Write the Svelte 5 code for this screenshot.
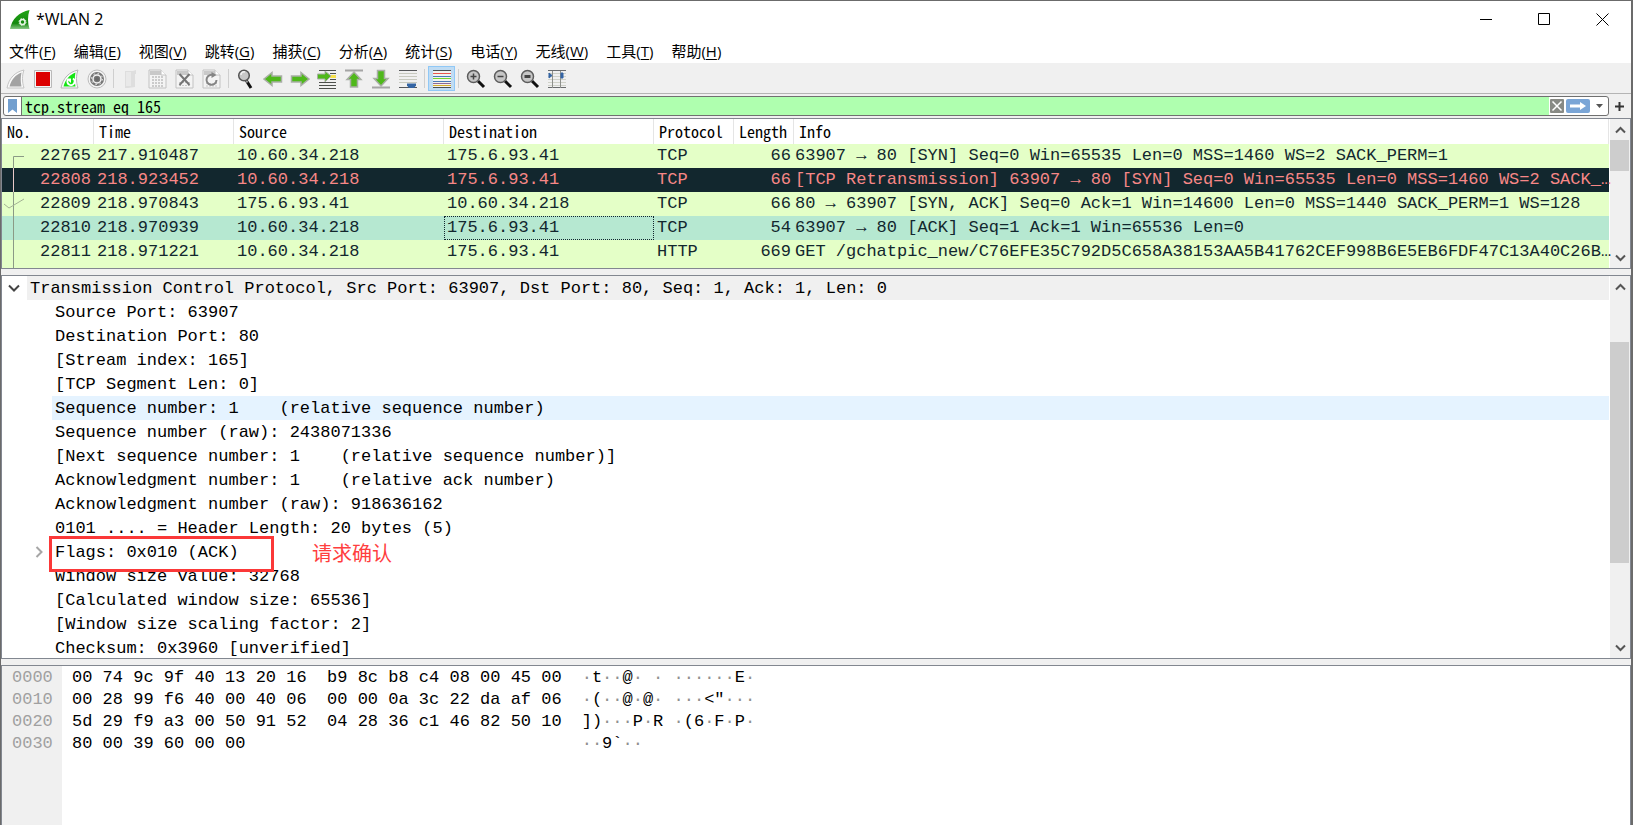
<script>
  const menus = [
    ['文件', 'F'], ['编辑', 'E'], ['视图', 'V'], ['跳转', 'G'], ['捕获', 'C'], ['分析', 'A'],
    ['统计', 'S'], ['电话', 'Y'], ['无线', 'W'], ['工具', 'T'], ['帮助', 'H']
  ];

  const tools = [
    ['start', 'stop', 'restart', 'options'],
    ['open', 'save', 'close', 'reload'],
    ['find', 'back', 'forward', 'goto', 'first', 'last', 'autoscroll'],
    ['colorize'],
    ['zoomin', 'zoomout', 'zoomreset', 'resize']
  ];

  const columns = ['No.', 'Time', 'Source', 'Destination', 'Protocol', 'Length', 'Info'];

  const packets = [
    { kind: 'http', cells: ['22765', '217.910487', '10.60.34.218', '175.6.93.41', 'TCP', '66', '63907 → 80 [SYN] Seq=0 Win=65535 Len=0 MSS=1460 WS=2 SACK_PERM=1'] },
    { kind: 'bad', cells: ['22808', '218.923452', '10.60.34.218', '175.6.93.41', 'TCP', '66', '[TCP Retransmission] 63907 → 80 [SYN] Seq=0 Win=65535 Len=0 MSS=1460 WS=2 SACK_…'] },
    { kind: 'http', cells: ['22809', '218.970843', '175.6.93.41', '10.60.34.218', 'TCP', '66', '80 → 63907 [SYN, ACK] Seq=0 Ack=1 Win=14600 Len=0 MSS=1440 SACK_PERM=1 WS=128'] },
    { kind: 'selected', cells: ['22810', '218.970939', '10.60.34.218', '175.6.93.41', 'TCP', '54', '63907 → 80 [ACK] Seq=1 Ack=1 Win=65536 Len=0'] },
    { kind: 'http', cells: ['22811', '218.971221', '10.60.34.218', '175.6.93.41', 'HTTP', '669', 'GET /gchatpic_new/C76EFE35C792D5C658A38153AA5B41762CEF998B6E5EB6FDF47C13A40C26B…'] }
  ];

  const fields = [
    'Source Port: 63907',
    'Destination Port: 80',
    '[Stream index: 165]',
    '[TCP Segment Len: 0]',
    'Sequence number: 1    (relative sequence number)',
    'Sequence number (raw): 2438071336',
    '[Next sequence number: 1    (relative sequence number)]',
    'Acknowledgment number: 1    (relative ack number)',
    'Acknowledgment number (raw): 918636162',
    '0101 .... = Header Length: 20 bytes (5)',
    'Flags: 0x010 (ACK)',
    'Window size value: 32768',
    '[Calculated window size: 65536]',
    '[Window size scaling factor: 2]',
    'Checksum: 0x3960 [unverified]'
  ];

  const bytes = [
    ['0000', '00 74 9c 9f 40 13 20 16  b9 8c b8 c4 08 00 45 00', '·t··@· · ······E·'],
    ['0010', '00 28 99 f6 40 00 40 06  00 00 0a 3c 22 da af 06', '·(··@·@· ···<"···'],
    ['0020', '5d 29 f9 a3 00 50 91 52  04 28 36 c1 46 82 50 10', '])···P·R ·(6·F·P·'],
    ['0030', '80 00 39 60 00 00', '··9`··']
  ];

  let filter = $state('tcp.stream eq 165');
</script>

{#snippet sheet()}
  <path d="M1 1h12l5 5v13H1z" fill="#f4f4f4" stroke="#c2c2c2" />
  <path d="M2 2h11v4H2z" fill="#c9c9c9" />
  <path d="M13 1v5h5" fill="#fff" stroke="#c2c2c2" />
{/snippet}

{#snippet lens()}
  <path d="M12 12l6 6" stroke="#111" stroke-width="3" />
  <circle cx="7.500" cy="7.500" r="6" fill="#c6c6c6" stroke="#5c5c5c" stroke-width="1.500" />
{/snippet}

{#snippet icon(name)}
  <svg width="20" height="20" viewBox="0 0 20 20" fill="none" aria-hidden="true">
    {#if name === 'start'}
      <path d="M1 19C3 9 9 3 18 1c-2 5-2 12 0 18z" fill="#fafafa" stroke="#c4c4c4" />
      <path d="M3.500 17.500C5.500 10 9.500 6 15.500 3.500c-1 5-1 9 0 14z" fill="#a3a3a3" />
    {:else if name === 'stop'}
      <path d="M1.500 1.500h17v17h-17z" fill="#f5f5f5" stroke="#b9b9b9" />
      <path d="M3 3h14v14H3z" fill="#dc0000" />
    {:else if name === 'restart'}
      <path d="M1 19C3 9 9 3 18 1c-2 5-2 12 0 18z" fill="#fafafa" stroke="#b5b5b5" />
      <path d="M3.500 17.500C5.500 10 9.500 6 15.500 3.500c-1 5-1 9 0 14z" fill="#14e514" />
      <path d="M8 10.500a3.600 3.600 0 1 0 5-1" stroke="#fff" stroke-width="2" />
      <path d="M6 9.500h5v4.500z" fill="#fff" />
    {:else if name === 'options'}
      <circle cx="10" cy="10" r="9" fill="#f4f4f4" stroke="#bcbcbc" />
      <circle cx="10" cy="10" r="7" fill="#777" />
      <circle cx="10" cy="10" r="4" stroke="#f4f4f4" stroke-width="1.500" />
      <circle cx="10" cy="10" r="5.500" stroke="#f4f4f4" stroke-dasharray="1.500 2.820" />
      <circle cx="10" cy="10" r="2" fill="#686868" />
    {:else if name === 'open'}
      <path d="M4 2h8l3-1v4h-1v13l-7 1H4z" fill="#dedede" />
      <path d="M5 3h5v14H5z" fill="#e9e9e9" />
    {:else if name === 'save'}
      {@render sheet()}
      <path d="M4 8h12M4 11h12M4 14h12M4 17h12" stroke="#cbcbcb" stroke-width="2" stroke-dasharray="2 1" />
    {:else if name === 'close'}
      {@render sheet()}
      <path d="M4 13.500h12M4 16.500h12" stroke="#c8c8c8" stroke-dasharray="2 1" />
      <path d="M4.500 5l10 11M14.500 5l-10 11" stroke="#747474" stroke-width="2" />
    {:else if name === 'reload'}
      {@render sheet()}
      <path d="M4 14.500h12M4 17h12" stroke="#c8c8c8" stroke-dasharray="2 1" />
      <path d="M12 6.500A5 5 0 1 0 14.500 11" stroke="#858585" stroke-width="2" />
      <path d="M9.500 3v6l5-3z" fill="#858585" />
    {:else if name === 'find'}
      <path d="M10 11l5 8" stroke="#111" stroke-width="3" />
      <path d="M9.500 10.500l2 3" stroke="#999" stroke-width="2" />
      <circle cx="8" cy="6.500" r="5.300" fill="#c7c7c7" stroke="#555" stroke-width="1.500" />
      <path d="M5 6a3 3 0 0 1 4-3" stroke="#f2f2f2" stroke-width="1.500" />
    {:else if name === 'back'}
      <path d="M1 10l8-6.500V7h9.500v6H9v3.500z" fill="#4fb81b" stroke="#a9aea6" stroke-width="1.500" />
    {:else if name === 'forward'}
      <path d="M19 10l-8-6.500V7H1.500v6H11v3.500z" fill="#4fb81b" stroke="#a9aea6" stroke-width="1.500" />
    {:else if name === 'goto'}
      <path d="M2 1.500h17M2 13.500h17M2 16.500h17M2 19.500h17M13 4.500h6M13 10.500h6" stroke="#4d504c" />
      <path d="M13 6h6v3h-6z" fill="#f6e04b" />
      <path d="M14 7l-6-5v3H0.500v5H8v3z" fill="#4fb81b" stroke="#a9aea6" />
    {:else if name === 'first'}
      <path d="M1 1.500h18" stroke="#a5a5a5" stroke-width="2" />
      <path d="M10 3l7 7.500h-3.500V18h-7v-7.500H3z" fill="#4fb81b" stroke="#a9aea6" stroke-width="1.500" />
    {:else if name === 'last'}
      <path d="M1 18.500h18" stroke="#a5a5a5" stroke-width="2" />
      <path d="M10 17l7-7.500h-3.500V1.500h-7v8H3z" fill="#4fb81b" stroke="#a9aea6" stroke-width="1.500" />
    {:else if name === 'autoscroll'}
      <path d="M1 4.500h18M1 7.500h18M1 10.500h18M1 13.500h18" stroke="#c7c9bf" />
      <path d="M1 1.500h18M1 18.500h18" stroke="#55575a" />
      <path d="M9 14.500h9v2l-2 2.500h-5l-2-2.500z" fill="#3465a4" />
    {:else if name === 'colorize'}
      <path d="M1 1h18v18H1z" fill="#f2f2ee" />
      <path d="M1 1.500h18M1 18.500h18" stroke="#4d5052" />
      <path d="M1 4.500h18" stroke="#e8554d" />
      <path d="M1 7.500h18" stroke="#4b78b7" />
      <path d="M1 9.500h18" stroke="#74d62f" />
      <path d="M1 12.500h18" stroke="#4b78b7" />
      <path d="M1 14.500h18" stroke="#8c6a96" />
      <path d="M1 16.500h18" stroke="#d3a928" />
    {:else if name === 'zoomin'}
      {@render lens()}
      <path d="M4.500 7.500h6M7.500 4.500v6" stroke="#444" stroke-width="1.500" />
    {:else if name === 'zoomout'}
      {@render lens()}
      <path d="M4.500 7.500h6" stroke="#444" stroke-width="1.500" />
    {:else if name === 'zoomreset'}
      {@render lens()}
      <path d="M4.500 7.500h6" stroke="#444" stroke-width="3" />
    {:else if name === 'resize'}
      <path d="M1 4.500h18M1 7.500h18M1 10.500h18M1 13.500h18M1 16.500h18" stroke="#d0d2c9" />
      <path d="M1 1.500h18M1 18.500h18" stroke="#6a6c6e" />
      <path d="M5.500 2v17M13.500 2v17" stroke="#8e908c" />
      <path d="M2 4l3 2.500L2 9zM16 4h-2v5h2z" fill="#3465a4" stroke="#3465a4" />
    {/if}
  </svg>
{/snippet}

{#snippet scrollbar(label, before, thumb, after)}
  <div class="scrollbar">
    <button aria-label="{label}: up"><svg width="11" height="8" viewBox="0 0 11 8"><path d="M1 6.500l4.500-4.500L10 6.500" /></svg></button>
    <div class="track">
      <span style="flex-grow: {before}"></span>
      <span class="thumb" style="flex-grow: {thumb}"></span>
      <span style="flex-grow: {after}"></span>
    </div>
    <button aria-label="{label}: down"><svg width="11" height="8" viewBox="0 0 11 8"><path d="M1 1.500L5.500 6 10 1.500" /></svg></button>
  </div>
{/snippet}

<div class="window">
  <header class="titlebar">
    <svg class="logo" width="20" height="20" viewBox="0 0 20 20" aria-hidden="true">
      <defs>
        <linearGradient id="fin" x1="0" y1="0" x2="0" y2="1">
          <stop offset="0" stop-color="#1fa514" />
          <stop offset="0.700" stop-color="#15890f" />
          <stop offset="1" stop-color="#8ac886" />
        </linearGradient>
      </defs>
      <path d="M0 19C2 9 9 2 19.500 0c-2 6-2 13 0 19z" fill="url(#fin)" />
      <circle cx="12.500" cy="12" r="2.500" fill="none" stroke="#e8f6e6" stroke-width="1.500" />
      <circle cx="12.500" cy="12" r="3.500" fill="none" stroke="#e8f6e6" stroke-dasharray="1.500 1.250" />
    </svg>
    <h1>*WLAN 2</h1>
    <div class="controls">
      <button aria-label="Minimize"><svg width="13" height="13" viewBox="0 0 13 13"><path d="M0 6.500h12" /></svg></button>
      <button aria-label="Maximize"><svg width="13" height="13" viewBox="0 0 13 13"><path d="M0.500 0.500h11v11h-11z" /></svg></button>
      <button aria-label="Close"><svg width="13" height="13" viewBox="0 0 13 13"><path d="M0.500 0.500l12 12M12.500 0.500l-12 12" /></svg></button>
    </div>
  </header>

  <nav class="menubar">
    {#each menus as [label, key]}
      <button>{label}(<u>{key}</u>)</button>
    {/each}
  </nav>

  <div class="toolbar">
    {#each tools as group}
      <div class="group">
        {#each group as name}
          <button class:on={name === 'colorize'} aria-label={name}>{@render icon(name)}</button>
        {/each}
      </div>
    {/each}
  </div>

  <div class="filterbar">
    <div class="filterbox">
      <button class="bookmark" aria-label="Bookmarks">
        <svg width="9" height="14" viewBox="0 0 9 14"><path d="M0 0h9v14L4.500 10.500 0 14z" fill="#729fcf" /></svg>
      </button>
      <input type="text" aria-label="Display filter" spellcheck="false" bind:value={filter} />
      <button class="clear" aria-label="Clear filter">
        <svg width="14" height="14" viewBox="0 0 14 14"><rect width="14" height="14" rx="1" fill="#888a85" /><path d="M2.500 2.500l9 9M11.500 2.500l-9 9" stroke="#fff" stroke-width="1.500" /></svg>
      </button>
      <button class="apply" aria-label="Apply filter">
        <svg width="24" height="14" viewBox="0 0 24 14"><rect width="24" height="14" rx="2" fill="#7aa5d6" /><path d="M4 5.500h10V3l6 4-6 4V8.500H4z" fill="#fff" /></svg>
      </button>
      <button class="recent" aria-label="Recent filters">
        <svg width="7" height="4" viewBox="0 0 7 4"><path d="M0 0h7L3.500 4z" fill="#555" /></svg>
      </button>
    </div>
    <button class="add" aria-label="Add filter button">
      <svg width="9" height="9" viewBox="0 0 9 9"><path d="M4.500 0v9M0 4.500h9" stroke="#333" stroke-width="2" /></svg>
    </button>
  </div>

  <section class="pane list">
    <div class="view">
      <table>
        <colgroup>
          <col class="c-no" /><col class="c-time" /><col class="c-addr" /><col class="c-addr" />
          <col class="c-proto" /><col class="c-len" /><col />
        </colgroup>
        <thead>
          <tr>{#each columns as column}<th>{column}</th>{/each}</tr>
        </thead>
        <tbody>
          {#each packets as packet}
            <tr class={packet.kind}>
              {#each packet.cells as cell, i}
                <td class:num={i === 0 || i === 5} class:current={packet.kind === 'selected' && i === 3}>{cell}</td>
              {/each}
            </tr>
          {/each}
        </tbody>
      </table>
      <svg class="related" width="24" height="124" viewBox="0 0 24 124" fill="none" aria-hidden="true">
        <path d="M22 12.500H11.500V24M11.500 48v76" stroke="#8b9a86" />
        <path d="M11.500 24v24" stroke="#e9c9c9" />
        <path d="M2 60l5 4 15-9" stroke="#a3b394" />
      </svg>
    </div>
    {@render scrollbar('Packet list', 0, 31, 77)}
  </section>

  <section class="pane details">
    <div class="view">
      <div class="protocol">
        <button aria-label="Collapse"><svg width="12" height="8" viewBox="0 0 12 8"><path d="M1 1.500L6 6.500l5-5" stroke="#444" /></svg></button>
        <span>Transmission Control Protocol, Src Port: 63907, Dst Port: 80, Seq: 1, Ack: 1, Len: 0</span>
      </div>
      <ul>
        {#each fields as field, i}
          <li class:hover={i === 4}>
            {#if field.startsWith('Flags')}
              <button class="expand" aria-label="Expand"><svg width="8" height="12" viewBox="0 0 8 12"><path d="M1.500 1l5 5-5 5" stroke="#a6a6a6" /></svg></button>
              <span class="mark"></span>
              <span class="note">请求确认</span>
            {/if}
            <span class="field">{field}</span>
          </li>
        {/each}
      </ul>
    </div>
    {@render scrollbar('Packet details', 45, 221, 74)}
  </section>

  <section class="pane hex">
    <div class="offsets">
      {#each bytes as [offset]}<div>{offset}</div>{/each}
    </div>
    <div class="dump">
      {#each bytes as [, data]}<div>{data}</div>{/each}
    </div>
    <div class="ascii">
      {#each bytes as [, , text]}
        <div>{#each text as ch}{#if ch === '·'}<i>{ch}</i>{:else}{ch}{/if}{/each}</div>
      {/each}
    </div>
  </section>
</div>

<style>
  :global(body) {
    margin: 0;
    background: #f0f0f0;
  }

  .window {
    --mono: "Liberation Mono", "DejaVu Sans Mono", monospace;
    --narrow: "Noto Sans Mono CJK SC", "Liberation Mono", monospace;
    --ui: "Open Sans", "Noto Sans CJK SC", sans-serif;
    --edge: #828790;
    box-sizing: border-box;
    display: flex;
    flex-direction: column;
    min-height: 100vh;
    border: 1px solid #6b6b6b;
    border-width: 1px 2px 0 1px;
    background: #f0f0f0;
    color: #000;
    font-family: var(--ui);
    font-size: 15px;
  }

  button {
    display: flex;
    align-items: center;
    justify-content: center;
    margin: 0;
    padding: 0;
    border: 0;
    background: none;
    color: inherit;
    font: inherit;
  }

  .titlebar {
    display: flex;
    align-items: center;
    height: 37px;
    padding-left: 9px;
    background: #fff;
  }

  h1 {
    flex: 1;
    margin: 0 0 2px 6px;
    font-size: 16px;
    font-weight: 400;
  }

  .controls {
    display: flex;
    height: 36px;
  }

  .controls button {
    width: 58px;
  }

  .controls path {
    fill: none;
    stroke: #000;
  }

  .menubar {
    display: flex;
    gap: 2px;
    height: 25px;
    background: #fff;
  }

  .menubar button {
    padding: 0 8px;
    white-space: nowrap;
  }

  u {
    text-underline-offset: 2px;
  }

  .toolbar {
    display: flex;
    padding: 2px 1px;
    border-top: 1px solid #f0f0f0;
    border-bottom: 1px solid #b4b4b4;
  }

  .group {
    display: flex;
  }

  .group + .group::before {
    content: "";
    width: 1px;
    height: 19px;
    margin: 3px;
    background: #cfcfcf;
  }

  .group button {
    box-sizing: border-box;
    width: 27px;
    height: 25px;
    border: 1px solid transparent;
  }

  .group button.on {
    border-color: #90c8f6;
    background: #c0dcf3;
  }

  .filterbar {
    display: flex;
    padding: 2px;
  }

  .filterbox {
    box-sizing: border-box;
    display: flex;
    flex: 1;
    height: 20px;
    overflow: hidden;
    border: 1px solid #707070;
    border-radius: 3px;
    background: #fff;
  }

  .bookmark {
    width: 18px;
    border-right: 1px solid #707070;
  }

  input {
    flex: 1;
    min-width: 0;
    padding: 0 3px;
    border: 0;
    outline: 0;
    background: #afffaf;
    color: #000;
    font-family: var(--narrow);
    font-size: 16px;
    line-height: 18px;
  }

  .clear {
    width: 16px;
  }

  .apply {
    width: 26px;
  }

  .recent {
    width: 17px;
  }

  .add {
    width: 20px;
  }

  .pane {
    position: relative;
    display: flex;
    border: 1px solid var(--edge);
    background: #fff;
  }

  .view {
    position: relative;
    flex: 1;
    min-width: 0;
    margin-right: 1px;
  }

  .list .view {
    padding-bottom: 4px;
    background: #e4ffc7;
  }

  table {
    width: 100%;
    border-collapse: collapse;
    table-layout: fixed;
  }

  .c-no { width: 92px; }
  .c-time { width: 140px; }
  .c-addr { width: 210px; }
  .c-proto { width: 80px; }
  .c-len { width: 60px; }

  th {
    height: 25px;
    padding: 0 0 0 5px;
    box-shadow: inset -1px 0 #e5e5e5;
    background: #fff;
    font-family: var(--narrow);
    font-size: 16px;
    font-weight: 400;
    line-height: 25px;
    text-align: left;
  }

  td {
    height: 24px;
    padding: 0 3px;
    color: #12272e;
    font-family: var(--mono);
    font-size: 17px;
    line-height: 24px;
    white-space: nowrap;
  }

  td:last-child {
    padding: 0 0 0 1px;
  }

  .http td { background: #e4ffc7; }
  .selected td { background: #b6e8d1; }

  .bad td {
    background: #12272e;
    color: #f78787;
  }

  .num {
    text-align: right;
  }

  td.current {
    outline: 1px dotted #12272e;
    outline-offset: -1px;
  }

  .related {
    position: absolute;
    top: 25px;
    left: 0;
  }

  .scrollbar {
    display: flex;
    flex-direction: column;
    width: 20px;
    background: #f0f0f0;
  }

  .scrollbar button {
    height: 21px;
  }

  .scrollbar path,
  .details path {
    fill: none;
    stroke-width: 2;
  }

  .scrollbar path {
    stroke: #555;
  }

  .track {
    display: flex;
    flex: 1;
    flex-direction: column;
  }

  .track span {
    flex-basis: 0;
  }

  .thumb {
    margin-right: 1px;
    background: #cdcdcd;
  }

  .details {
    height: 382px;
    margin-top: 6px;
    font-family: var(--mono);
    font-size: 17px;
    line-height: 26px;
  }

  .protocol {
    display: flex;
    height: 24px;
  }

  .protocol button {
    width: 25px;
    padding-right: 2px;
  }

  .protocol span {
    flex: 1;
    padding-left: 3px;
    background: #f0f0f0;
  }

  ul {
    margin: 0;
    padding: 0 0 0 50px;
    list-style: none;
  }

  li {
    position: relative;
    display: flex;
    height: 24px;
    padding-left: 3px;
  }

  li.hover {
    background: #e5f3ff;
  }

  .field {
    white-space: pre;
  }

  .expand {
    position: absolute;
    top: 6px;
    left: -17px;
  }

  .mark {
    box-sizing: border-box;
    position: absolute;
    z-index: 1;
    top: -4px;
    left: -3px;
    width: 225px;
    height: 36px;
    border: 3px solid #fb3838;
  }

  .note {
    position: absolute;
    left: 260px;
    color: #ff3e3e;
    font-family: "Noto Sans CJK SC", sans-serif;
    font-size: 20px;
  }

  .hex {
    flex: 1;
    margin-top: 6px;
    border-bottom: 0;
    font-family: var(--mono);
    font-size: 17px;
    line-height: 22px;
  }

  .offsets,
  .dump,
  .ascii {
    padding-top: 1px;
  }

  .offsets {
    width: 50px;
    padding-left: 10px;
    background: #f0f0f0;
    color: #a0a0a0;
  }

  .dump {
    padding-right: 20px;
    padding-left: 10px;
    white-space: pre;
  }

  .ascii div {
    white-space: pre;
  }

  i {
    color: #8f8f8f;
    font-style: normal;
  }
</style>
